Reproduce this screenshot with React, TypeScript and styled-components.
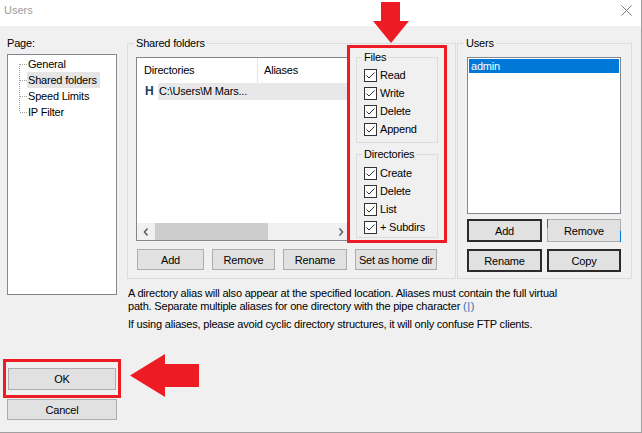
import React from "react";
import styled, { createGlobalStyle, css } from "styled-components";

const GlobalStyle = createGlobalStyle`
  html, body { margin: 0; padding: 0; background: #ffffff; }
  body {
    font-family: "Liberation Sans", Arial, sans-serif;
    font-size: 11px;
    letter-spacing: -0.2px;
    color: #000000;
  }
  *, *::before, *::after { box-sizing: border-box; }
`;

const RED = "#ed1c24";

const Window = styled.div`
  position: relative;
  width: 642px;
  height: 433px;
  background: #f0f0f0;
  border-right: 1px solid #a0a0a0;
  border-bottom: 1px solid #a0a0a0;
  display: flex;
  flex-direction: column;
  overflow: hidden;
`;

const TitleBar = styled.div`
  flex: none;
  height: 26px;
  background: #ffffff;
  display: flex;
  align-items: flex-start;
  justify-content: space-between;
  padding: 4px 9px 0 4px;
`;

const TitleText = styled.span`
  font-size: 11px;
  line-height: 13px;
  letter-spacing: 0;
  color: #9b9b9b;
`;

const CloseGlyph = styled.svg`
  display: block;
  margin-top: 1px;
`;

const Body = styled.div`
  flex: 1;
  display: flex;
  gap: 10px;
  padding: 11px 0 12px 7px;
`;

const LeftColumn = styled.div`
  width: 110px;
  flex: none;
  display: flex;
  flex-direction: column;
`;

const PageLabel = styled.div`
  line-height: 13px;
  margin-bottom: 4px;
`;

const Tree = styled.div`
  height: 241px;
  background: #ffffff;
  border: 1px solid #828790;
  padding: 1px 0 0 11px;
`;

const dotV = "repeating-linear-gradient(to bottom, #a0a0a0 0 1px, transparent 1px 2px)";
const dotH = "repeating-linear-gradient(to right, #a0a0a0 0 1px, transparent 1px 2px)";

const TreeItem = styled.div`
  display: flex;
  height: 16px;
`;

const Connector = styled.span<{ $pos: "first" | "mid" | "last" }>`
  width: 8px;
  flex: none;
  background-repeat: no-repeat;
  background-image: ${dotH}, ${dotV};
  background-size: 8px 1px, 1px ${(p) => (p.$pos === "mid" ? "100%" : "50%")};
  background-position: 1px 8px,
    ${(p) => (p.$pos === "first" ? "left bottom" : "left top")};
`;

const TreeLabel = styled.span<{ $selected?: boolean }>`
  line-height: 16px;
  padding: 0 3px 0 1px;
  white-space: nowrap;
  background: ${(p) => (p.$selected ? "#e5e5e5" : "transparent")};
`;

const OkFrame = styled.div`
  margin: auto -1px 0;
  padding: 6px 2px 5px;
  outline: 3px solid ${RED};
`;

const DialogButton = styled.button<{ $h?: number }>`
  display: block;
  width: 100%;
  height: ${(p) => p.$h ?? 22}px;
  margin: 0;
  padding: 0;
  background: #e1e1e1;
  border: 1px solid #adadad;
  font: inherit;
  letter-spacing: inherit;
  color: #000;
`;

const CancelButton = styled(DialogButton)`
  margin-top: 4px;
`;

const RightColumn = styled.div`
  width: 505px;
  flex: none;
  display: flex;
  flex-direction: column;
`;

const TopRow = styled.div`
  display: flex;
  gap: 1px;
  height: 242px;
`;

const GroupBox = styled.fieldset<{ $w: number }>`
  margin: 0;
  padding: 0;
  min-width: 0;
  width: ${(p) => p.$w}px;
  border: 1px solid #dcdcdc;
`;

const GroupTitle = styled.legend<{ $inset?: number }>`
  padding: 0 2px;
  margin-left: ${(p) => p.$inset ?? 6}px;
  line-height: 13px;
  font-size: 11px;
`;

const SharedInner = styled.div`
  display: flex;
  flex-direction: column;
  padding: 0 11px 8px 8px;
`;

const SharedContent = styled.div`
  display: flex;
  align-items: flex-start;
`;

const ListView = styled.div`
  width: 214px;
  height: 184px;
  margin-top: 7px;
  background: #ffffff;
  border: 1px solid #828790;
  display: flex;
  flex-direction: column;
`;

const ListHeader = styled.div`
  height: 25px;
  display: flex;
  flex: none;
`;

const HeaderCell = styled.div<{ $w?: number; $pad: number; $divider?: boolean }>`
  ${(p) => (p.$w ? css`width: ${p.$w}px;` : css`flex: 1;`)}
  padding-left: ${(p) => p.$pad}px;
  line-height: 25px;
  ${(p) => p.$divider && css`border-right: 1px solid #e5e5e5;`}
`;

const ListRow = styled.div`
  height: 17px;
  display: flex;
  flex: none;
`;

const HomeMark = styled.span`
  width: 21px;
  flex: none;
  padding-left: 8px;
  font-weight: bold;
  font-size: 12px;
  line-height: 17px;
  letter-spacing: 0;
  color: #1c3b63;
`;

const RowLabel = styled.span`
  flex: 1;
  padding-left: 1px;
  line-height: 17px;
  background: #e8e8e8;
  white-space: nowrap;
`;

const ListFill = styled.div`
  flex: 1;
`;

const HScroll = styled.div`
  height: 17px;
  flex: none;
  display: flex;
  background: #f0f0f0;
`;

const ScrollArrow = styled.div`
  width: 17px;
  flex: none;
  display: flex;
  align-items: center;
  justify-content: center;
`;

const ScrollTrack = styled.div`
  flex: 1;
  display: flex;
  padding-left: 1px;
`;

const ScrollThumb = styled.div`
  width: 113px;
  background: #cdcdcd;
`;

const PermColumn = styled.div`
  width: 94px;
  height: 192px;
  margin-top: -2px;
  flex: none;
  outline: 3px solid ${RED};
  padding: 3px 6px 2px;
  display: flex;
  flex-direction: column;
  gap: 5px;
`;

const PermGroup = styled.fieldset<{ $h: number }>`
  margin: 0;
  padding: 0;
  min-width: 0;
  height: ${(p) => p.$h}px;
  border: 1px solid #dcdcdc;
`;

const PermList = styled.div<{ $top: number }>`
  padding: ${(p) => p.$top}px 0 0 7px;
`;

const CheckRow = styled.label`
  display: flex;
  align-items: center;
  gap: 3px;
  height: 18px;
  white-space: nowrap;
`;

const CheckBox = styled.span`
  width: 13px;
  height: 13px;
  flex: none;
  border: 1px solid #333333;
  background: #ffffff;
  display: flex;
`;

const ButtonRow = styled.div`
  display: flex;
  gap: 8px;
  margin-top: 8px;
  padding-left: 1px;
`;

const SmallButton = styled.button<{ $w: number }>`
  width: ${(p) => p.$w}px;
  height: 21px;
  margin: 0;
  padding: 0;
  background: #e1e1e1;
  border: 1px solid #adadad;
  font: inherit;
  letter-spacing: inherit;
  color: #000;
  white-space: nowrap;
`;

const UsersInner = styled.div`
  padding: 7px 10px 6px 9px;
`;

const UserList = styled.div`
  height: 157px;
  background: #ffffff;
  border: 1px solid #828790;
  padding: 1px;
`;

const UserItem = styled.div<{ $selected?: boolean }>`
  height: 14px;
  line-height: 14px;
  padding-left: 2px;
  background: ${(p) => (p.$selected ? "#0078d7" : "transparent")};
  color: ${(p) => (p.$selected ? "#ffffff" : "#000000")};
`;

const UserButtons = styled.div`
  display: grid;
  grid-template-columns: 75px 74px;
  column-gap: 5px;
  row-gap: 7px;
  margin-top: 5px;
`;

const UserButton = styled.button<{ $focus?: boolean }>`
  position: relative;
  height: 23px;
  margin: 0;
  padding: 0;
  font: inherit;
  letter-spacing: inherit;
  color: #000;
  background: #e1e1e1;
  ${(p) =>
    p.$focus
      ? css`
          border: 1px solid #adadad;
          &::before,
          &::after {
            content: "";
            position: absolute;
            width: 1px;
            background: #0078d7;
          }
          &::before { left: -1px; top: -1px; height: 9px; }
          &::after { right: -1px; bottom: -1px; height: 11px; }
        `
      : css`
          border: 2px solid #2b2b2b;
        `}
`;

const Description = styled.div`
  margin-top: 8px;
  padding-left: 1px;
  line-height: 13px;
`;

const DescPara = styled.p<{ $gap?: number }>`
  margin: ${(p) => p.$gap ?? 0}px 0 0;
`;

const Pipe = styled.span`
  color: #2d6db5;
  letter-spacing: 0.6px;
`;

const Annotation = styled.svg<{ $left: number; $top: number }>`
  position: absolute;
  left: ${(p) => p.$left}px;
  top: ${(p) => p.$top}px;
  display: block;
`;

const Check = () => (
  <CheckBox>
    <svg width="11" height="11" viewBox="0 0 11 11">
      <polyline points="1.5,5.5 4,8 9.5,2.5" fill="none" stroke="#333333" strokeWidth="1" />
    </svg>
  </CheckBox>
);

const Chevron = ({ dir }: { dir: "left" | "right" }) => (
  <svg width="6" height="8" viewBox="0 0 6 8">
    <polyline
      points={dir === "left" ? "4.5,0.5 1.5,4 4.5,7.5" : "1.5,0.5 4.5,4 1.5,7.5"}
      fill="none"
      stroke="#606060"
      strokeWidth="1.6"
    />
  </svg>
);

const treeItems = ["General", "Shared folders", "Speed Limits", "IP Filter"];
const filePerms = ["Read", "Write", "Delete", "Append"];
const dirPerms = ["Create", "Delete", "List", "+ Subdirs"];

export default function App() {
  return (
    <>
      <GlobalStyle />
      <Window>
        <TitleBar>
          <TitleText>Users</TitleText>
          <CloseGlyph width="11" height="11" viewBox="0 0 11 11">
            <path d="M0.5 0.5 L10.5 10.5 M10.5 0.5 L0.5 10.5" stroke="#7a7a7a" strokeWidth="1" />
          </CloseGlyph>
        </TitleBar>
        <Body>
          <LeftColumn>
            <PageLabel>Page:</PageLabel>
            <Tree>
              {treeItems.map((item, i) => (
                <TreeItem key={item}>
                  <Connector $pos={i === 0 ? "first" : i === treeItems.length - 1 ? "last" : "mid"} />
                  <TreeLabel $selected={i === 1}>{item}</TreeLabel>
                </TreeItem>
              ))}
            </Tree>
            <OkFrame>
              <DialogButton $h={22}>OK</DialogButton>
            </OkFrame>
            <CancelButton $h={21}>Cancel</CancelButton>
          </LeftColumn>
          <RightColumn>
            <TopRow>
              <GroupBox $w={329}>
                <GroupTitle>Shared folders</GroupTitle>
                <SharedInner>
                  <SharedContent>
                    <ListView>
                      <ListHeader>
                        <HeaderCell $w={121} $pad={7} $divider>Directories</HeaderCell>
                        <HeaderCell $pad={6}>Aliases</HeaderCell>
                      </ListHeader>
                      <ListRow>
                        <HomeMark>H</HomeMark>
                        <RowLabel>C:\Users\M Mars...</RowLabel>
                      </ListRow>
                      <ListFill />
                      <HScroll>
                        <ScrollArrow><Chevron dir="left" /></ScrollArrow>
                        <ScrollTrack><ScrollThumb /></ScrollTrack>
                        <ScrollArrow><Chevron dir="right" /></ScrollArrow>
                      </HScroll>
                    </ListView>
                    <PermColumn>
                      <PermGroup $h={92}>
                        <GroupTitle $inset={5}>Files</GroupTitle>
                        <PermList $top={2}>
                          {filePerms.map((p) => (
                            <CheckRow key={p}><Check />{p}</CheckRow>
                          ))}
                        </PermList>
                      </PermGroup>
                      <PermGroup $h={90}>
                        <GroupTitle $inset={5}>Directories</GroupTitle>
                        <PermList $top={3}>
                          {dirPerms.map((p) => (
                            <CheckRow key={p}><Check />{p}</CheckRow>
                          ))}
                        </PermList>
                      </PermGroup>
                    </PermColumn>
                  </SharedContent>
                  <ButtonRow>
                    <SmallButton $w={67}>Add</SmallButton>
                    <SmallButton $w={63}>Remove</SmallButton>
                    <SmallButton $w={64}>Rename</SmallButton>
                    <SmallButton $w={82}>Set as home dir</SmallButton>
                  </ButtonRow>
                </SharedInner>
              </GroupBox>
              <GroupBox $w={175}>
                <GroupTitle>Users</GroupTitle>
                <UsersInner>
                  <UserList>
                    <UserItem $selected>admin</UserItem>
                  </UserList>
                  <UserButtons>
                    <UserButton>Add</UserButton>
                    <UserButton $focus>Remove</UserButton>
                    <UserButton>Rename</UserButton>
                    <UserButton>Copy</UserButton>
                  </UserButtons>
                </UsersInner>
              </GroupBox>
            </TopRow>
            <Description>
              <DescPara>
                A directory alias will also appear at the specified location. Aliases must contain the full virtual
                <br />
                path. Separate multiple aliases for one directory with the pipe character <Pipe>(|)</Pipe>
              </DescPara>
              <DescPara $gap={5}>
                If using aliases, please avoid cyclic directory structures, it will only confuse FTP clients.
              </DescPara>
            </Description>
          </RightColumn>
        </Body>
        <Annotation $left={372} $top={0} width="38" height="46" viewBox="0 0 38 46">
          <polygon points="9,2 28,2 28,21 37,21 19,43 1,21 9,21" fill={RED} />
        </Annotation>
        <Annotation $left={128} $top={352} width="74" height="48" viewBox="0 0 74 48">
          <polygon points="2,23.5 37,2 37,12 71,12 71,35 37,35 37,45" fill={RED} />
        </Annotation>
      </Window>
    </>
  );
}
